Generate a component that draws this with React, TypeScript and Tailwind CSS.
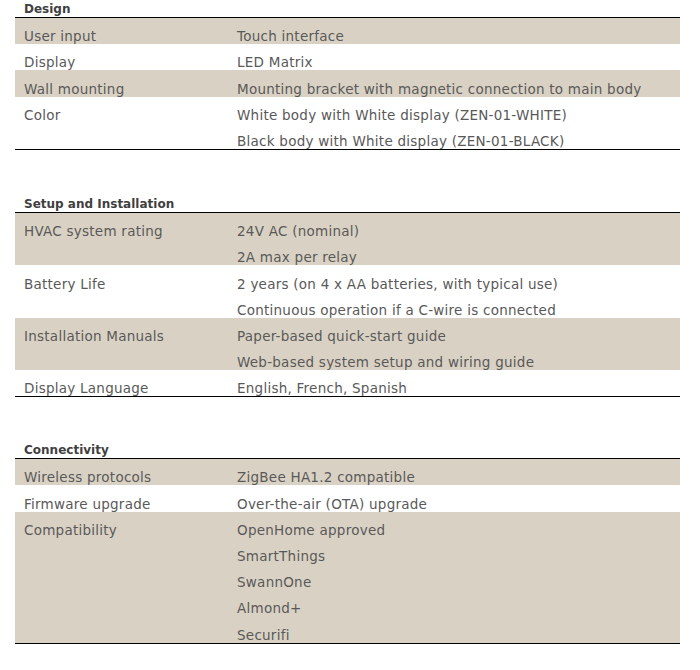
import * as React from "react";

type Row = { label: string; values: string[] };
type Section = { title: string; rows: Row[]; gap: string };

const sections: Section[] = [
	{
		title: "Design",
		gap: "",
		rows: [
			{ label: "User input", values: ["Touch interface"] },
			{ label: "Display", values: ["LED Matrix"] },
			{
				label: "Wall mounting",
				values: ["Mounting bracket with magnetic connection to main body"],
			},
			{
				label: "Color",
				values: [
					"White body with White display (ZEN-01-WHITE)",
					"Black body with White display (ZEN-01-BLACK)",
				],
			},
		],
	},
	{
		title: "Setup and Installation",
		gap: "mt-[45px]",
		rows: [
			{ label: "HVAC system rating", values: ["24V AC (nominal)", "2A max per relay"] },
			{
				label: "Battery Life",
				values: [
					"2 years (on 4 x AA batteries, with typical use)",
					"Continuous operation if a C-wire is connected",
				],
			},
			{
				label: "Installation Manuals",
				values: [
					"Paper-based quick-start guide",
					"Web-based system setup and wiring guide",
				],
			},
			{ label: "Display Language", values: ["English, French, Spanish"] },
		],
	},
	{
		title: "Connectivity",
		gap: "mt-[44px]",
		rows: [
			{ label: "Wireless protocols", values: ["ZigBee HA1.2 compatible"] },
			{ label: "Firmware upgrade", values: ["Over-the-air (OTA) upgrade"] },
			{
				label: "Compatibility",
				values: [
					"OpenHome approved",
					"SmartThings",
					"SwannOne",
					"Almond+",
					"Securifi",
				],
			},
		],
	},
];

function SpecSection({ section }: { section: Section }) {
	return (
		<div className={section.gap}>
			{/* section title sits right on the top rule */}
			<div className="h-[17px] flex items-end pl-[9px]">
				<span className="font-bold text-[#3f3f3f] text-[12px] leading-[16px] tracking-normal">
					{section.title}
				</span>
			</div>
			<div className="border-t border-b border-black">
				{section.rows.map((row, i) => (
					<div
						key={row.label}
						className={`flex ${i % 2 === 0 ? "bg-[#d9d2c4]" : "bg-white"}`}
					>
						<div className="w-[222px] pl-[9px] h-[26.2px] flex items-end">
							<span className="leading-[16px]">{row.label}</span>
						</div>
						<div className="flex-1 flex flex-col">
							{row.values.map((v) => (
								<div key={v} className="h-[26.2px] flex items-end">
									<span className="leading-[16px]">{v}</span>
								</div>
							))}
						</div>
					</div>
				))}
			</div>
		</div>
	);
}

export default function App() {
	return (
		<div
			className="w-[700px] h-[670px] bg-white pl-[15px] pr-[20px] text-[13.5px] tracking-[0.25px] text-[#595959]"
			style={{ fontFamily: '"DejaVu Sans", sans-serif' }}
		>
			{sections.map((s) => (
				<SpecSection key={s.title} section={s} />
			))}
		</div>
	);
}
